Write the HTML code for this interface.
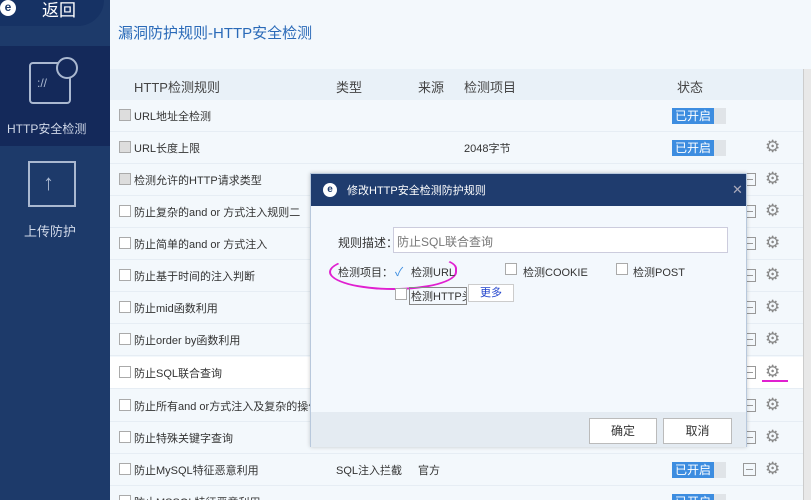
<!DOCTYPE html><html><head><meta charset="utf-8"><style>
*{margin:0;padding:0;box-sizing:border-box}
html{width:811px;height:500px;overflow:hidden}
body{width:811px;height:500px;overflow:hidden;background:#f3f8fc;font-family:"Liberation Sans","Noto Sans CJK SC",sans-serif;position:relative;color:#333}
.side{position:absolute;left:0;top:0;width:110px;height:500px;background:#1d3a6a}
.abs{position:absolute}
.row{position:absolute;left:110px;width:693px;height:32px;font-size:11px;border-bottom:1px solid #e6edf4}
.cb{position:absolute;left:9px;top:9px;width:12px;height:12px;border:1px solid #aaa;background:#fff}
.cb.g{background:#ddd}
.row .t{position:absolute;left:24px;top:8px}
.on{position:absolute;left:562px;top:8px;width:54px;height:16px;background:#e0e4e8}
.on span{display:block;width:42px;height:16px;background:#3d8de0;color:#fff;font-size:12px;text-align:center;line-height:16px}
.mn{position:absolute;left:633px;top:9px;width:13px;height:13px;border:1px solid #999}
.mn:after{content:"";position:absolute;left:2px;top:5px;width:7px;height:1px;background:#999}
.gr{position:absolute;left:655px;top:6px;font-size:17px;color:#888;line-height:18px}
</style></head><body>
<div class="side">
<div class="abs" style="left:0;top:0;width:110px;height:46px;background:#1d3a6a"></div>
<div class="abs" style="left:0;top:0;width:104px;height:26px;background:#163264;border-radius:0 0 30px 0"></div>
<div class="abs" style="left:0;top:0;width:16px;height:16px;border-radius:50%;background:#fff;color:#1d3a6a;font-size:12px;text-align:center;line-height:14px;font-weight:bold">e</div>
<div class="abs" style="left:42px;top:0;color:#fff;font-size:17px;line-height:22px">返回</div>
<div class="abs" style="left:0;top:46px;width:110px;height:100px;background:#14295a"></div>
<div class="abs" style="left:29px;top:62px;width:42px;height:42px;border:2px solid #aab8d0;border-radius:4px"></div>
<div class="abs" style="left:56px;top:57px;width:22px;height:22px;border:2px solid #aab8d0;border-radius:50%;background:#14295a"></div>
<div class="abs" style="left:37px;top:76px;color:#aab8d0;font-size:12px">://</div>
<div class="abs" style="left:7px;top:120px;color:#d0d8e8;font-size:12px">HTTP安全检测</div>
<div class="abs" style="left:28px;top:161px;width:48px;height:46px;border:2px solid #aab8d0"></div>
<div class="abs" style="left:43px;top:172px;color:#aab8d0;font-size:22px;line-height:22px">↑</div>
<div class="abs" style="left:24px;top:221px;color:#d0d8e8;font-size:13px">上传防护</div>
</div>
<div class="abs" style="left:118px;top:22px;font-size:15px;color:#2a6ab8">漏洞防护规则-HTTP安全检测</div>
<div class="abs" style="left:110px;top:69px;width:693px;height:31px;background:#e9f1f8;font-size:13px;color:#444">
<span class="abs" style="left:24px;top:8px">HTTP检测规则</span><span class="abs" style="left:226px;top:8px">类型</span><span class="abs" style="left:308px;top:8px">来源</span><span class="abs" style="left:354px;top:8px">检测项目</span><span class="abs" style="left:567px;top:8px">状态</span></div>
<div class="abs" style="left:803px;top:69px;width:8px;height:431px;background:#e8e8e8;border-left:1px solid #ccc"></div>
<div class="row" style="top:100px"><div class="cb g"></div><span class="t">URL地址全检测</span><div class="on"><span>已开启</span></div></div>
<div class="row" style="top:132px"><div class="cb g"></div><span class="t">URL长度上限</span><span class="abs" style="left:354px;top:8px">2048字节</span><div class="on"><span>已开启</span></div><span class="gr">⚙</span></div>
<div class="row" style="top:164px"><div class="cb g"></div><span class="t">检测允许的HTTP请求类型</span><div class="mn"></div><span class="gr">⚙</span></div>
<div class="row" style="top:196px"><div class="cb"></div><span class="t">防止复杂的and or 方式注入规则二</span><div class="mn"></div><span class="gr">⚙</span></div>
<div class="row" style="top:228px"><div class="cb"></div><span class="t">防止简单的and or 方式注入</span><div class="mn"></div><span class="gr">⚙</span></div>
<div class="row" style="top:260px"><div class="cb"></div><span class="t">防止基于时间的注入判断</span><div class="mn"></div><span class="gr">⚙</span></div>
<div class="row" style="top:292px"><div class="cb"></div><span class="t">防止mid函数利用</span><div class="mn"></div><span class="gr">⚙</span></div>
<div class="row" style="top:324px"><div class="cb"></div><span class="t">防止order by函数利用</span><div class="mn"></div><span class="gr">⚙</span></div>
<div class="row" style="top:357px;background:#fff"><div class="cb"></div><span class="t">防止SQL联合查询</span><div class="mn"></div><span class="gr">⚙</span><div class="abs" style="left:652px;top:23px;width:26px;height:2px;background:#e020d0"></div></div>
<div class="row" style="top:390px"><div class="cb"></div><span class="t">防止所有and or方式注入及复杂的操作</span><div class="mn"></div><span class="gr">⚙</span></div>
<div class="row" style="top:422px"><div class="cb"></div><span class="t">防止特殊关键字查询</span><div class="mn"></div><span class="gr">⚙</span></div>
<div class="row" style="top:454px"><div class="cb"></div><span class="t">防止MySQL特征恶意利用</span><span class="abs" style="left:226px;top:8px">SQL注入拦截</span><span class="abs" style="left:308px;top:8px">官方</span><div class="on"><span>已开启</span></div><div class="mn"></div><span class="gr">⚙</span></div>
<div class="row" style="top:486px"><div class="cb"></div><span class="t">防止MSSQL特征恶意利用</span><div class="on"><span>已开启</span></div></div>
<div class="abs" style="left:310px;top:173px;width:437px;height:274px;background:#f3f8fd;border:1px solid #b8c8dc;box-shadow:0 0 4px rgba(0,0,0,.2)">
<div class="abs" style="left:0;top:0;width:435px;height:32px;background:#1f3c6e"></div>
<div class="abs" style="left:12px;top:9px;width:14px;height:14px;border-radius:50%;background:#fff;color:#1f3c6e;font-size:10px;text-align:center;line-height:13px;font-weight:bold">e</div>
<div class="abs" style="left:36px;top:8px;color:#fff;font-size:11px">修改HTTP安全检测防护规则</div>
<div class="abs" style="left:421px;top:8px;color:#aab;font-size:13px">✕</div>
<div class="abs" style="left:27px;top:60px;font-size:12px">规则描述：</div>
<div class="abs" style="left:82px;top:53px;width:335px;height:26px;background:#fff;border:1px solid #ccd;font-size:12px;color:#777;padding:5px 3px">防止SQL联合查询</div>
<div class="abs" style="left:27px;top:90px;font-size:11px">检测项目：</div>
<div class="abs" style="left:18px;top:80px;width:128px;height:36px;border:2px solid #e020d0;border-radius:50% 40% 50% 50%;border-top-color:transparent"></div>
<div class="abs" style="left:84px;top:89px;color:#3d8de0;font-size:12px">✓</div><div class="abs" style="left:100px;top:90px;font-size:11px">检测URL</div>
<div class="abs" style="left:194px;top:89px;width:12px;height:12px;border:1px solid #aaa;background:#fff"></div><div class="abs" style="left:212px;top:90px;font-size:11px">检测COOKIE</div>
<div class="abs" style="left:305px;top:89px;width:12px;height:12px;border:1px solid #aaa;background:#fff"></div><div class="abs" style="left:322px;top:90px;font-size:11px">检测POST</div>
<div class="abs" style="left:84px;top:114px;width:12px;height:12px;border:1px solid #aaa;background:#fff"></div><div class="abs" style="left:98px;top:113px;font-size:11px;border:1px solid #888;padding:0 1px;width:58px;overflow:hidden;white-space:nowrap">检测HTTP头</div>
<div class="abs" style="left:157px;top:110px;width:46px;height:18px;background:#fff;border:1px solid #ccc;color:#2244cc;font-size:11px;text-align:center;line-height:16px">更多</div>
<div class="abs" style="left:0;top:238px;width:435px;height:35px;background:#e4ebf2"></div>
<div class="abs" style="left:278px;top:244px;width:68px;height:26px;background:#fff;border:1px solid #bbb;font-size:12px;text-align:center;line-height:24px">确定</div>
<div class="abs" style="left:352px;top:244px;width:69px;height:26px;background:#fff;border:1px solid #bbb;font-size:12px;text-align:center;line-height:24px">取消</div>
</div>
</body></html>
